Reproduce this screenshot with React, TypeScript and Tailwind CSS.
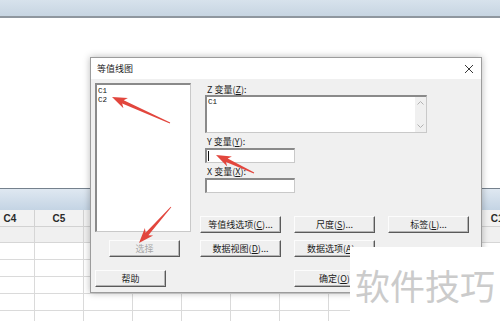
import React from 'react';

const cjk = "font-['Noto_Sans_CJK_SC','Noto_Sans',sans-serif]";

const gridCols = ['C4', 'C5', 'C6', 'C7', 'C8', 'C9', 'C10', 'C11', 'C12', 'C13', 'C14'];

// tapered annotation arrow, tail -> tip
const arrowPoints = (tx: number, ty: number, px: number, py: number) => {
  const dx = px - tx;
  const dy = py - ty;
  const len = Math.hypot(dx, dy);
  const ux = dx / len;
  const uy = dy / len;
  const nx = -uy;
  const ny = ux;
  const bx = px - ux * 12;
  const by = py - uy * 12;
  const pts = [
    [tx + nx * 0.4, ty + ny * 0.4],
    [bx + nx * 1.9, by + ny * 1.9],
    [bx - ux * 3 + nx * 5.5, by - uy * 3 + ny * 5.5],
    [px, py],
    [bx - ux * 3 - nx * 5.5, by - uy * 3 - ny * 5.5],
    [bx - nx * 1.9, by - ny * 1.9],
    [tx - nx * 0.4, ty - ny * 0.4],
  ];
  return pts.map((p) => p.map((v) => v.toFixed(1)).join(',')).join(' ');
};

const Key = ({ k }: { k: string }) => <span className="underline underline-offset-1">{k}</span>;

const WinButton = ({
  children,
  disabled,
  className = '',
}: {
  children: React.ReactNode;
  disabled?: boolean;
  className?: string;
}) => (
  <div
    className={`h-[17px] flex items-center justify-center bg-[#efefef] border-t border-l border-[#fcfcfc] border-b border-r border-b-[#5a5a5a] border-r-[#5a5a5a] shadow-[inset_-1px_-1px_0_#b4b4b4] text-[9px] leading-none whitespace-nowrap ${
      disabled ? 'text-[#a7a7a7]' : 'text-[#1a1a1a]'
    } ${className}`}
  >
    {children}
  </div>
);

const Label = ({ children, className = '' }: { children: React.ReactNode; className?: string }) => (
  <div className={`pl-[2px] text-[9px] leading-none text-[#1a1a1a] flex items-center ${className}`}>{children}</div>
);

const Sunken = ({ className = '', children }: { className?: string; children?: React.ReactNode }) => (
  <div
    className={`bg-white border-t-2 border-l-2 border-[#8a8a8a] border-b border-r border-b-[#c9c9c9] border-r-[#c9c9c9] ${className}`}
  >
    {children}
  </div>
);

export default function App() {
  return (
    <div className={`relative w-[500px] h-[321px] overflow-hidden bg-white ${cjk}`}>
      {/* background worksheet */}
      <div className="h-[18px] bg-gradient-to-b from-[#d7e2ec] to-[#c7d5e2] border-b-2 border-[#8f979f]" />
      <div className="h-[170px] bg-white" />
      <div className="h-[22px] border-t border-[#75818d] bg-gradient-to-b from-[#dfe8f1] to-[#c4d4e4]" />
      <div className="flex ml-[-14px] h-[17px] bg-[#f2f2f2] border-b border-[#d2d2d2]">
        {gridCols.map((c) => (
          <div
            key={c}
            className="w-[49px] shrink-0 border-r border-[#d2d2d2] text-center text-[10px] font-bold leading-[17px] text-[#2a2a2a] font-['Liberation_Sans',sans-serif]"
          >
            {c}
          </div>
        ))}
      </div>
      <div className="flex ml-[-14px] h-[16px] bg-[#f0f0f0] border-b border-[#d6d6d6]">
        {gridCols.map((c) => (
          <div key={c} className="w-[49px] shrink-0 border-r border-[#d6d6d6]" />
        ))}
      </div>
      {[0, 1, 2, 3, 4].map((r) => (
        <div key={r} className="flex ml-[-14px] h-[17px] bg-white border-b border-[#dadada]">
          {gridCols.map((c) => (
            <div key={c} className="w-[49px] shrink-0 border-r border-[#dadada]" />
          ))}
        </div>
      ))}

      {/* dialog window */}
      <div className="absolute left-[90px] top-[57px] w-[392px] h-[236px] bg-[#f0f0f0] border border-[#9c9c9c] shadow-[0_0_7px_rgba(0,0,0,0.28)] flex flex-col">
        <div className="h-[21px] bg-white flex items-center justify-between pl-[6px] pr-[6px] shrink-0">
          <span className="text-[9px] text-[#222]">等值线图</span>
          <svg width="10" height="10" viewBox="0 0 10 10" className="mr-[1px]">
            <path d="M1 1 L9 9 M9 1 L1 9" stroke="#3a3a3a" strokeWidth="1" fill="none" />
          </svg>
        </div>

        <div className="flex pt-[4px] pl-[4px]">
          {/* left column */}
          <div className="w-[96px] flex flex-col shrink-0">
            <Sunken className="h-[149px] pt-[2px] pl-[1px]">
              <div className="text-[7.5px] leading-[9px] text-[#111] font-['Liberation_Mono',monospace]">C1</div>
              <div className="text-[7.5px] leading-[9px] text-[#111] font-['Liberation_Mono',monospace]">C2</div>
            </Sunken>
            <WinButton disabled className="mt-[8px] ml-[14px] w-[71px]">
              选择
            </WinButton>
            <WinButton className="mt-[13px] w-[71px]">帮助</WinButton>
          </div>

          {/* right column */}
          <div className="ml-[9px] flex flex-col">
            <div className="pl-[5px] flex flex-col">
              <Label className="h-[12px]">
                Z 变量(<Key k="Z" />):
              </Label>
              <Sunken className="h-[38px] w-[222px] flex">
                <div className="flex-1 pl-[1px] pt-[1px] text-[7.5px] leading-[9px] text-[#111] font-['Liberation_Mono',monospace]">
                  C1
                </div>
                <div className="w-[11px] bg-[#f0f0f0] flex flex-col items-center justify-between py-[4px]">
                  <svg width="7" height="4" viewBox="0 0 7 4">
                    <path d="M0.5 3.5 L3.5 0.5 L6.5 3.5" stroke="#b2b2b2" strokeWidth="1" fill="none" />
                  </svg>
                  <svg width="7" height="4" viewBox="0 0 7 4">
                    <path d="M0.5 0.5 L3.5 3.5 L6.5 0.5" stroke="#b2b2b2" strokeWidth="1" fill="none" />
                  </svg>
                </div>
              </Sunken>
              <Label className="h-[15px] pt-[2px]">
                Y 变量(<Key k="Y" />):
              </Label>
              <Sunken className="h-[15px] w-[90px] flex items-center pl-[1px]">
                <div className="w-px h-[10px] bg-[#111]" />
              </Sunken>
              <Label className="h-[15px] pt-[1px]">
                X 变量(<Key k="X" />):
              </Label>
              <Sunken className="h-[15px] w-[90px]" />
            </div>

            <div className="flex gap-[13px] mt-[23px]">
              <WinButton className="w-[81px]">
                等值线选项(<Key k="C" />)...
              </WinButton>
              <WinButton className="w-[81px]">
                尺度(<Key k="S" />)...
              </WinButton>
              <WinButton className="w-[81px]">
                标签(<Key k="L" />)...
              </WinButton>
            </div>
            <div className="flex gap-[13px] mt-[7px]">
              <WinButton className="w-[81px]">
                数据视图(<Key k="D" />)...
              </WinButton>
              <WinButton className="w-[81px]">
                数据选项(<Key k="A" />)...
              </WinButton>
            </div>
            <div className="flex gap-[13px] mt-[13px]">
              <div className="w-[81px]" />
              <WinButton className="w-[81px]">
                确定(<Key k="O" />)
              </WinButton>
            </div>
          </div>
        </div>
      </div>

      {/* red annotation arrows */}
      <svg className="absolute left-0 top-0 pointer-events-none" width="500" height="321" viewBox="0 0 500 321">
        <polygon points={arrowPoints(170, 123, 112, 97)} fill="#e2463d" />
        <polygon points={arrowPoints(254, 173, 216, 155)} fill="#e2463d" />
        <polygon points={arrowPoints(171, 207, 139, 243)} fill="#e2463d" />
      </svg>

      {/* watermark */}
      <div className="absolute left-[350px] top-[247px] w-[150px] h-[74px] bg-white flex items-center pl-[5px]">
        <span className="text-[35px] leading-none text-[#cbcbcb]">软件技巧</span>
      </div>
    </div>
  );
}
